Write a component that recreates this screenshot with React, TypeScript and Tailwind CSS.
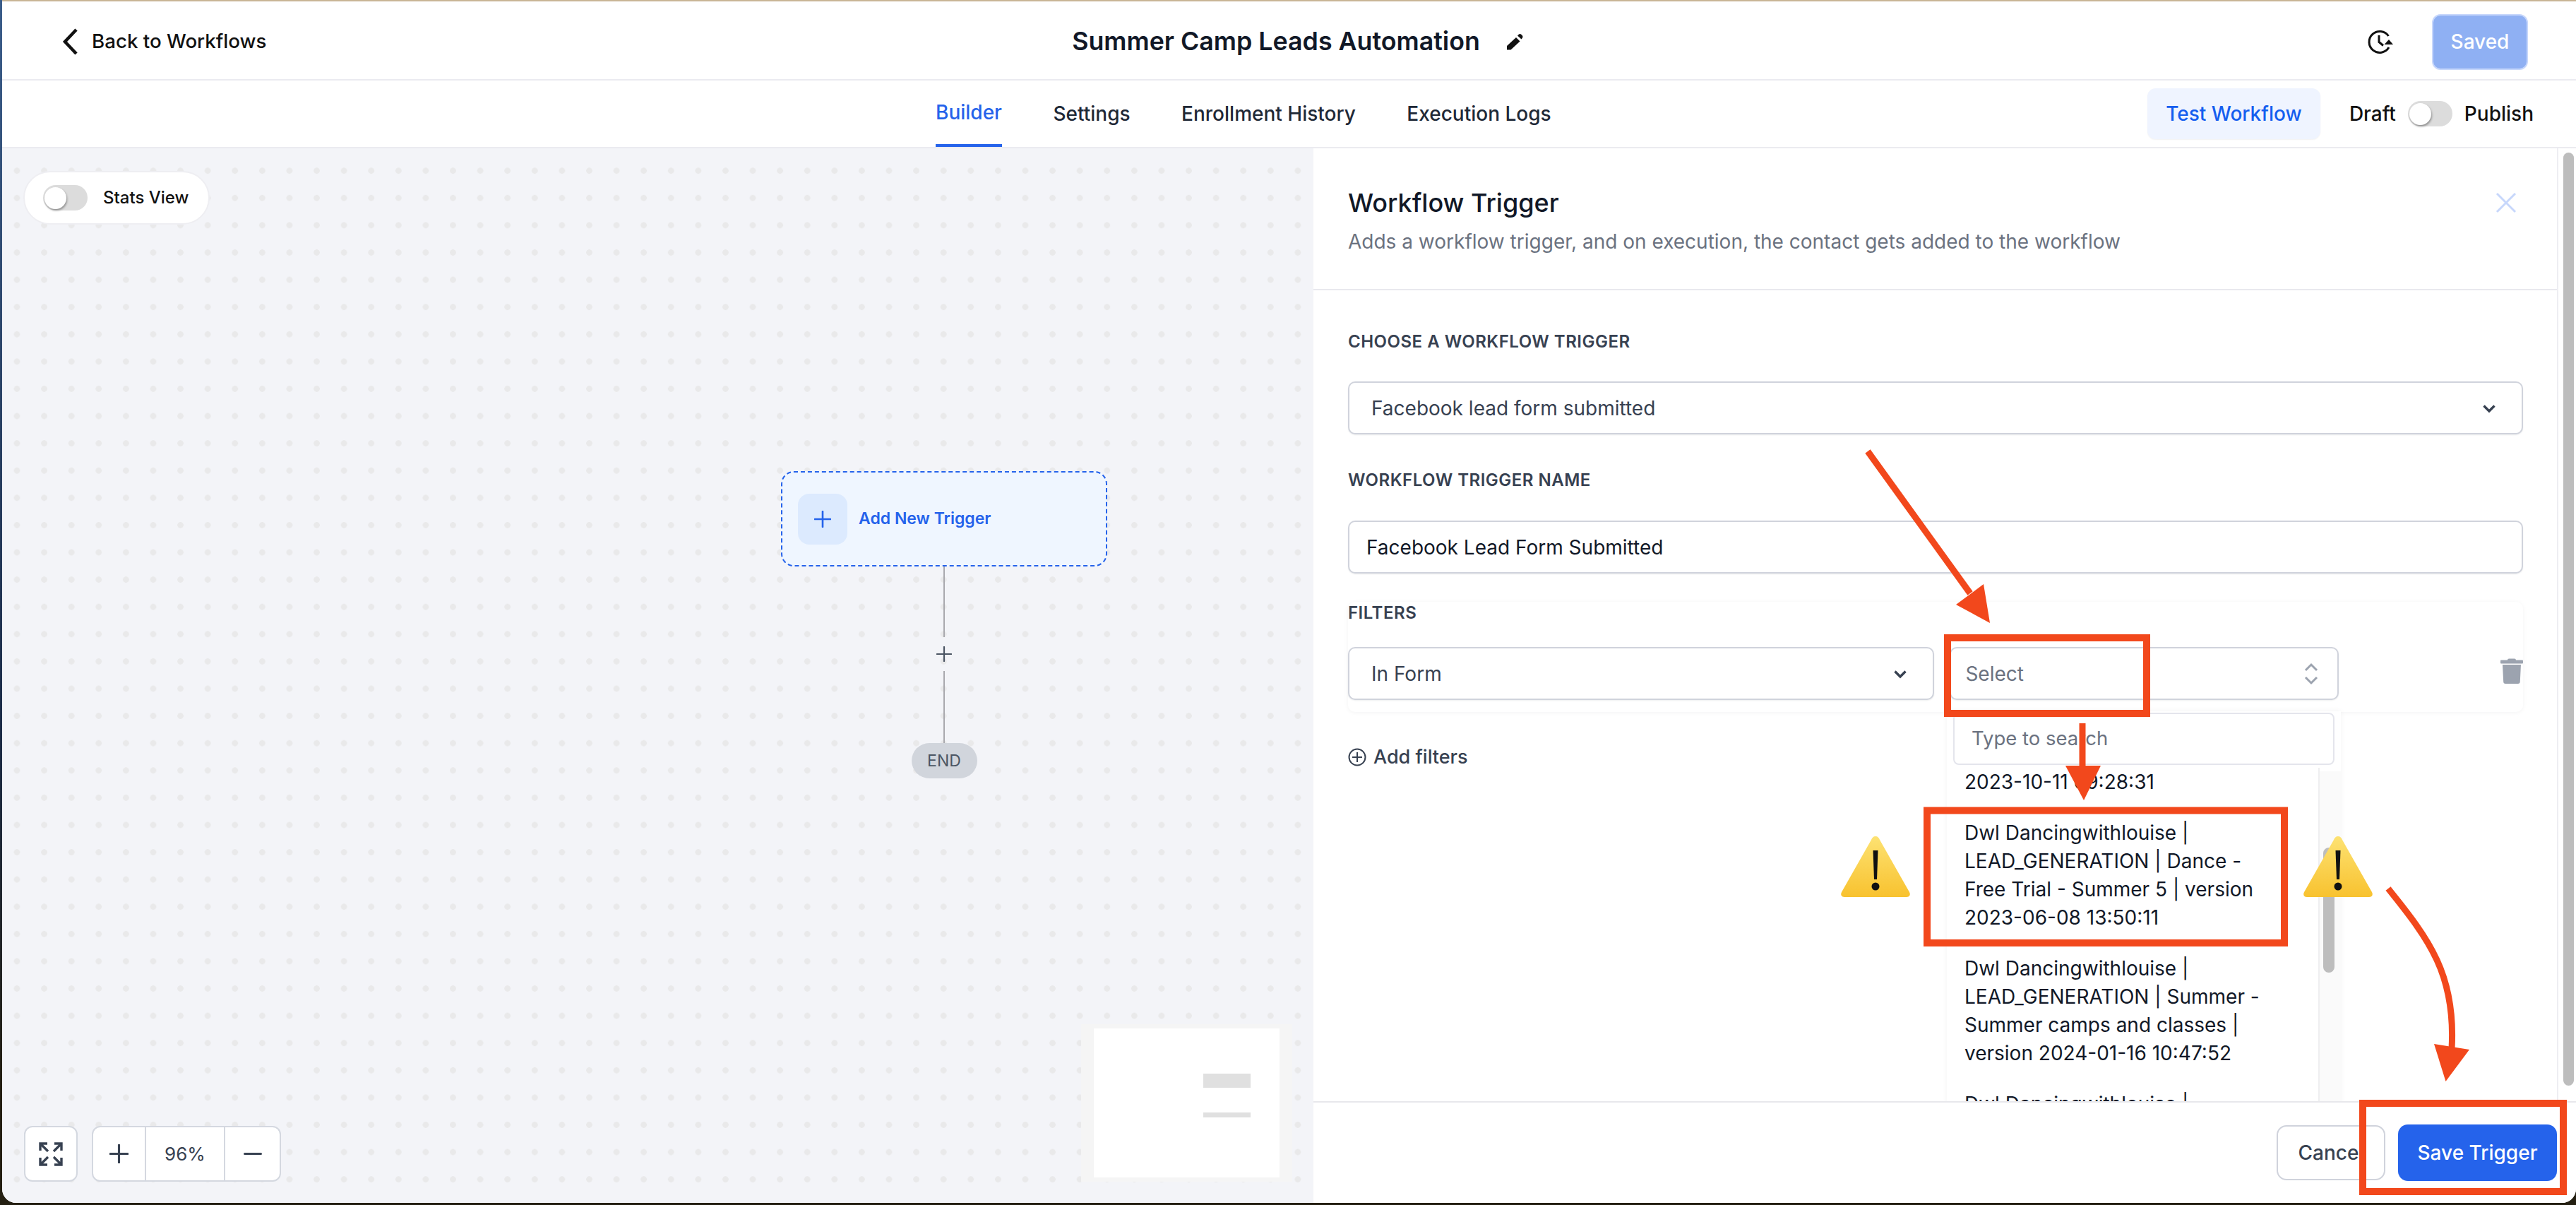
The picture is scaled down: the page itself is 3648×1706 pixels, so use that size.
const orange = "#f2481c";

function Toggle() {
  return (
    <span className="flex h-[36px] w-[63px] shrink-0 items-center rounded-full bg-[#dcdcdc] pl-[2px]">
      <span className="h-[31px] w-[31px] rounded-full bg-white shadow-[1px_2px_3px_rgba(0,0,0,0.35)]" />
    </span>
  );
}

function Chevron() {
  return (
    <svg width="24" height="24" viewBox="0 0 24 24" fill="none" stroke="#374151" strokeWidth="3.4">
      <path d="M4.5 8.5 12 16l7.5-7.5" />
    </svg>
  );
}

function Plus({ size, color, width }: { size: number; color: string; width: number }) {
  return (
    <svg width={size} height={size} viewBox="0 0 24 24" fill="none" stroke={color} strokeWidth={width} strokeLinecap="round">
      <path d="M12 1v22M1 12h22" />
    </svg>
  );
}

function Annotations() {
  return (
    <svg className="pointer-events-none absolute left-0 top-0" width="3648" height="1706" viewBox="0 0 3648 1706" fill="none">
      <defs>
        <linearGradient id="warn" x1="0" y1="0" x2="0" y2="1">
          <stop offset="0" stopColor="#fde272" />
          <stop offset="1" stopColor="#f8c22f" />
        </linearGradient>
        <g id="warning">
          <path d="M50 2c3 0 5 2 6 5l42 74c2 4 0 7-4 7H6c-4 0-6-3-4-7L44 7c1-3 3-5 6-5Z" fill="url(#warn)" />
          <path d="M46.5 22h7l-1.5 41h-4Z" fill="#111" />
          <circle cx="50" cy="73" r="5.5" fill="#111" />
        </g>
      </defs>
      <path d="M2645 639 2790 840" stroke={orange} strokeWidth="9" />
      <path d="M2809 827 2818 882 2770 856Z" fill={orange} />
      <rect x="2758" y="903" width="282" height="107" stroke={orange} strokeWidth="10" />
      <path d="M2949 1024V1090" stroke={orange} strokeWidth="9" />
      <path d="M2925 1084h50l-24 49Z" fill={orange} />
      <rect x="2729" y="1147.5" width="506" height="187.5" stroke={orange} strokeWidth="10" />
      <path d="M3382 1258C3440 1330 3478 1380 3472 1485" stroke={orange} strokeWidth="9" />
      <path d="M3447 1478 3497 1486 3463.5 1531Z" fill={orange} />
      <rect x="3346" y="1562" width="284" height="125" stroke={orange} strokeWidth="10" />
      <use href="#warning" x="2606" y="1182" />
      <use href="#warning" x="3261" y="1182" />
    </svg>
  );
}

function Canvas() {
  return (
    <div className="relative w-[1857px] shrink-0 bg-[#f3f4f8] bg-[radial-gradient(circle,#e9e9ea_4px,transparent_4.6px)] bg-[length:38.6px_38.6px] bg-[position:1.7px_12.4px]">
      <div className="absolute left-[30px] top-[32px] flex h-[76px] w-[264px] items-center gap-[22px] rounded-full border-2 border-[#eeeef2] bg-white pl-[26px]">
        <Toggle />
        <span className="text-[24px] font-medium text-[#111]">Stats View</span>
      </div>

      {/* trigger node, connector, end pill */}
      <div className="absolute left-[1103px] top-[457px] flex w-[462px] flex-col items-center">
        <div className="flex h-[135px] w-full items-center gap-[16px] rounded-[18px] border-2 border-dashed border-[#2563eb] bg-[#eff6ff] pl-[22px]">
          <span className="flex h-[72px] w-[70px] items-center justify-center rounded-[16px] bg-[#dceafe]">
            <Plus size={24} color="#2563eb" width={2.6} />
          </span>
          <span className="text-[23px] font-semibold text-[#2563eb]">Add New Trigger</span>
        </div>
        <span className="h-[100px] w-[2px] bg-[#a9a9ae]" />
        <span className="my-[12px] flex h-[24px] items-center">
          <Plus size={22} color="#4b5563" width={2.4} />
        </span>
        <span className="h-[102px] w-[2px] bg-[#a9a9ae]" />
        <span className="flex h-[50px] w-[93px] items-center justify-center rounded-full bg-[#d1d5dc] text-[23px] text-[#4b5563]">END</span>
      </div>

      <div className="absolute bottom-[30px] left-[31px] flex items-stretch gap-[20px]">
        <button className="flex h-[79px] w-[76px] items-center justify-center rounded-[12px] border-2 border-[#d4d8e0] bg-white">
          <svg width="34" height="34" viewBox="0 0 34 34" fill="none" stroke="#374151" strokeWidth="3.4">
            <path d="M2 12V2h10M2 2l11 11M22 2h10v10M32 2 21 13M2 22v10h10M2 32l11-11M22 32h10V22M32 32 21 21" />
          </svg>
        </button>
        <div className="flex h-[79px] items-stretch rounded-[12px] border-2 border-[#d4d8e0] bg-white">
          <span className="flex w-[75px] items-center justify-center border-r-2 border-[#d4d8e0]">
            <Plus size={27} color="#374151" width={2.8} />
          </span>
          <span className="flex w-[112px] items-center justify-center border-r-2 border-[#d4d8e0] text-[26px] text-[#374151]">96%</span>
          <span className="flex w-[77px] items-center justify-center">
            <svg width="26" height="4"><rect width="26" height="3" rx="1.5" fill="#374151" /></svg>
          </span>
        </div>
      </div>

      <div className="absolute left-[1528px] top-[1240px] h-[223px] w-[299px] border-x-[18px] border-y-[6px] border-[#f5f5f5] bg-white">
        <div className="ml-[155px] mt-[64px] h-[20px] w-[67px] bg-[#e0e0e0]" />
        <div className="ml-[155px] mt-[35px] h-[7px] w-[67px] bg-[#e0e0e0]" />
      </div>
    </div>
  );
}

const options = [
  ["2023-10-11 09:28:31"],
  ["Dwl Dancingwithlouise |", "LEAD_GENERATION | Dance -", "Free Trial - Summer 5 | version", "2023-06-08 13:50:11"],
  ["Dwl Dancingwithlouise |", "LEAD_GENERATION | Summer -", "Summer camps and classes |", "version 2024-01-16 10:47:52"],
  ["Dwl Dancingwithlouise |"],
];

function Dropdown() {
  return (
    <div className="absolute left-[897px] top-[596px] w-[558px] bg-white shadow-[0_0_8px_rgba(0,0,0,0.05)]">
      <div className="px-[9px] pb-[9px] pt-[2px]">
        <div className="flex h-[74px] items-center rounded-[8px] border-2 border-[#e4e5ec] pl-[24px] text-[27.5px] text-[#6b7280]">Type to search</div>
      </div>
      <div className="flex h-[480px]">
        <div className="-mt-[5px] flex w-[528px] flex-col gap-[32px] border-r-2 border-[#eeeef0] pl-[25px] text-[28px] leading-[40px] text-[#111827]">
          {options.map((lines, i) => (
            <div key={i}>
              {lines.map((l) => (
                <div key={l} className="whitespace-nowrap">{l}</div>
              ))}
            </div>
          ))}
        </div>
        <div className="flex-1 bg-[#fafafa] pl-[5px] pt-[108px]">
          <div className="h-[177px] w-[16px] rounded-full bg-[#bdbdbd]" />
        </div>
      </div>
    </div>
  );
}

const fieldClass = "flex h-[75px] items-center justify-between rounded-[10px] border-2 border-[#d0d3dc] bg-white text-[28px] shadow-[0_1px_2px_rgba(16,24,40,0.08)]";
const labelClass = "text-[24px] font-semibold tracking-[0.5px] leading-[32px] text-[#374151]";

function Panel() {
  return (
    <div className="flex min-w-0 flex-1">
      <div className="flex min-w-0 flex-1 flex-col border-r-2 border-[#eeeef2]">
        <div className="relative flex h-[201px] shrink-0 flex-col border-b-2 border-[#e9e9ee] pl-[49px]">
          <h2 className="mt-[53px] text-[36px] font-medium leading-[48px] text-[#111827]">Workflow Trigger</h2>
          <p className="mt-[11px] text-[28px] leading-[40px] text-[#6b7280]">Adds a workflow trigger, and on execution, the contact gets added to the workflow</p>
          <svg className="absolute right-[57px] top-[62px]" width="30" height="30" viewBox="0 0 30 30" fill="none" stroke="#c7d7fb" strokeWidth="3">
            <path d="M2 2l26 26M28 2 2 28" />
          </svg>
        </div>

        <div className="relative min-h-0 flex-1 overflow-hidden pl-[49px] pr-[48px] pt-[57px]">
          <div className={labelClass}>CHOOSE A WORKFLOW TRIGGER</div>
          <div className={fieldClass + " mt-[40px] pl-[31px] pr-[34px] text-[#374151]"}>
            Facebook lead form submitted
            <Chevron />
          </div>
          <div className={labelClass + " mt-[49px]"}>WORKFLOW TRIGGER NAME</div>
          <div className={fieldClass + " mt-[41px] pl-[24px] text-[#111827]"}>Facebook Lead Form Submitted</div>

          <div className="mt-[40px] h-[156px] rounded-[10px] shadow-[0_1px_6px_rgba(16,24,40,0.05)]">
            <div className={labelClass}>FILTERS</div>
            <div className="mt-[32px] flex items-center">
              <div className={fieldClass + " w-[831px] pl-[31px] pr-[34px] text-[#374151]"}>
                In Form
                <Chevron />
              </div>
              <div className={fieldClass + " ml-[22px] w-[551px] pl-[20px] pr-[25px] text-[#6b7280]"}>
                Select
                <svg width="24" height="40" viewBox="0 0 24 40" fill="none" stroke="#9ca3af" strokeWidth="3">
                  <path d="M4 15 12 7l8 8M4 25l8 8 8-8" />
                </svg>
              </div>
              <svg className="-mt-[7px] ml-[229px]" width="32" height="36" viewBox="0 0 32 36" fill="#9ca3af">
                <path d="M10 2.5c0-1 1-2 2-2h8c1 0 2 1 2 2h9a1 1 0 0 1 1 1v3a1 1 0 0 1-1 1H1a1 1 0 0 1-1-1v-3a1 1 0 0 1 1-1Z" />
                <path d="M3 9h26l-1.2 24a3 3 0 0 1-3 3H7.2a3 3 0 0 1-3-3Z" />
              </svg>
            </div>
          </div>

          <div className="mt-[44px] flex items-center gap-[10px] text-[27px] font-medium text-[#374151]">
            <svg width="26" height="26" viewBox="0 0 26 26" fill="none" stroke="#374151" strokeWidth="2">
              <circle cx="13" cy="13" r="11.5" />
              <path d="M13 6v14M6 13h14" />
            </svg>
            Add filters
          </div>

          <Dropdown />
        </div>
      </div>
      <div className="w-[25px] shrink-0 bg-white pl-[7px] pt-[6px]">
        <div className="h-[1321px] w-[15px] rounded-full bg-[#bdbdbd]" />
      </div>
    </div>
  );
}

export default function App() {
  return (
    <div className="relative h-[1706px] w-[3648px] overflow-hidden bg-[linear-gradient(180deg,#3b5d8a_0%,#1c2c48_60%,#241f12_90%)] pb-[3px] pl-[3px] font-['Inter',sans-serif] text-[#111]">
      <div className="flex h-full flex-col overflow-hidden rounded-b-[20px] bg-white">
        <div className="-ml-[3px] h-[2px] shrink-0 bg-[#c9b596]" />

        <header className="grid h-[112px] shrink-0 grid-cols-[1fr_auto_1fr] items-center border-b-2 border-[#ebebf0] pt-[4px]">
          <div className="flex items-center gap-[18px] pl-[83px]">
            <svg width="26" height="40" viewBox="0 0 26 40" fill="none" stroke="#111" strokeWidth="4.5">
              <path d="M22 3 6 20l16 17" />
            </svg>
            <span className="text-[27.7px] font-medium">Back to Workflows</span>
          </div>
          <div className="ml-[24px] flex items-center gap-[37px]">
            <span className="text-[35.75px] font-semibold text-[#111827]">Summer Camp Leads Automation</span>
            <svg width="24" height="24" viewBox="0 0 24 24" fill="#111">
              <path d="M1 18 14 6l5.5 5.5-13 12H1Z" />
              <path d="M16 3.5l2-2q1.500-1 3 0l2 2q1 1.500 0 3l-1.500 2Z" />
            </svg>
          </div>
          <div className="flex items-center justify-end pr-[68px]">
            <svg width="38" height="38" viewBox="0 0 38 38" fill="none" stroke="#111" strokeWidth="3">
              <path d="M31.500 11A15 15 0 1 0 32 27" />
              <path d="M18 10v9.500l6 5" />
              <path d="M25.500 23H38l-6-7Z" fill="#111" stroke="none" />
            </svg>
            <button className="ml-[55px] h-[79px] w-[136px] rounded-[12px] border-2 border-[#c7d7fb] bg-[#8fb0f3] text-[28px] font-medium text-white">Saved</button>
          </div>
        </header>

        <div className="flex h-[96px] shrink-0 items-stretch border-b-2 border-[#ebebf0] pl-[1322px] pr-[60px]">
          <nav className="flex items-stretch gap-[72.5px] text-[28px] font-medium text-[#1f2937]">
            <span className="flex items-center border-b-4 border-[#2563eb] text-[#2563eb]">Builder</span>
            <span className="flex items-center">Settings</span>
            <span className="flex items-center">Enrollment History</span>
            <span className="flex items-center">Execution Logs</span>
          </nav>
          <div className="ml-auto flex items-center text-[28px] font-medium">
            <button className="h-[72px] w-[245px] rounded-[12px] bg-[#eff4ff] text-[#155eef] shadow-[0_1px_2px_rgba(16,24,40,0.06)]">Test Workflow</button>
            <span className="ml-[41px]">Draft</span>
            <span className="ml-[17px]"><Toggle /></span>
            <span className="ml-[17px]">Publish</span>
          </div>
        </div>

        <div className="flex min-h-0 flex-1">
          <Canvas />
          <div className="relative flex min-w-0 flex-1 flex-col">
            <div className="flex min-h-0 flex-1"><Panel /></div>
            <div className="relative flex h-[144px] shrink-0 items-start justify-end gap-[18px] border-t-2 border-[#e8e8ec] bg-white pr-[27px] pt-[31px]">
              <button className="mt-[1px] h-[78px] w-[154px] rounded-[14px] border-2 border-[#d0d3dc] bg-white text-[28px] font-medium text-[#374151]">Cancel</button>
              <button className="h-[80px] w-[225px] rounded-[14px] bg-[#2563eb] text-[28px] font-medium text-white">Save Trigger</button>
            </div>
          </div>
        </div>
      </div>
      <Annotations />
    </div>
  );
}
